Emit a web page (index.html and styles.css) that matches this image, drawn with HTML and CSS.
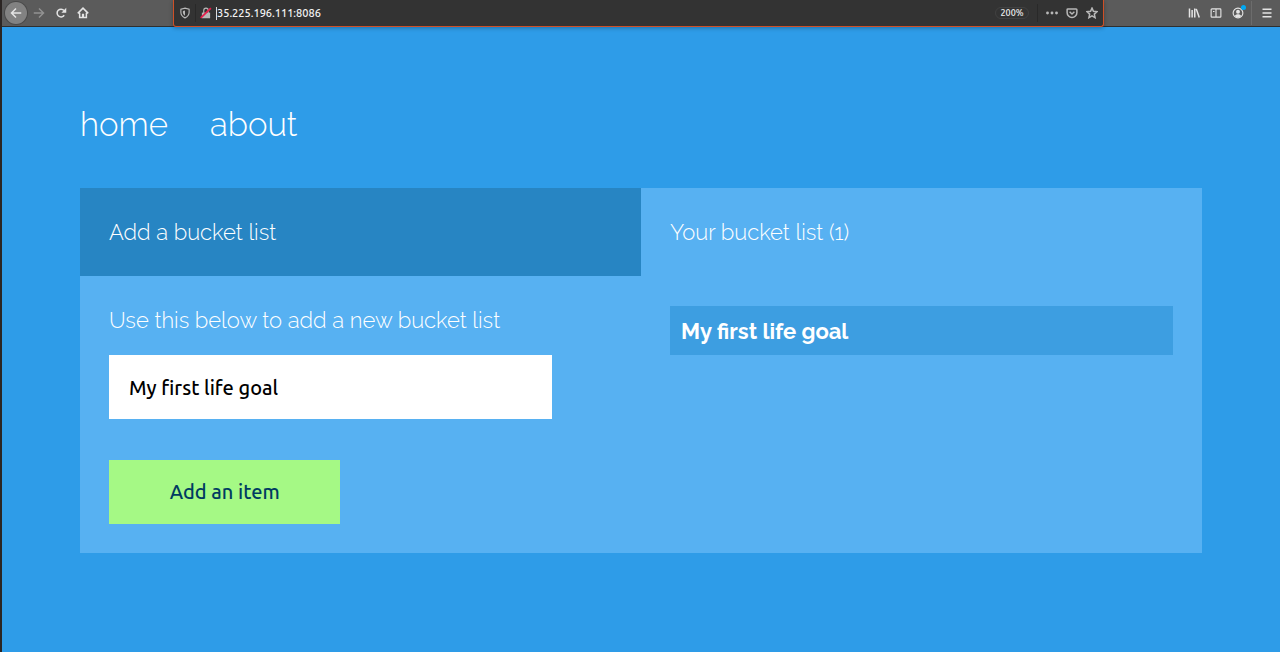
FILE: index.html
```html
<!DOCTYPE html>
<html lang="en">
<head>
<meta charset="utf-8">
<title>Bucket list</title>
<link rel="stylesheet" href="styles.css">
</head>
<body>
<div class="window">
  <header class="toolbar">
    <div class="nav-buttons">
      <button class="icon-button back" aria-label="Back"><svg viewBox="0 0 16 16"><path d="M15 8H1.500M8 2L2 8l6 6"/></svg></button>
      <button class="icon-button forward" aria-label="Forward"><svg viewBox="0 0 16 16"><path d="M1 8h13.500M8 2l6 6-6 6"/></svg></button>
      <button class="icon-button" aria-label="Reload"><svg viewBox="0 0 16 16"><path d="M12.300 11A5.200 5.200 0 1 1 12 4.700"/><path class="solid" d="M15 1v6.500H8.500z"/></svg></button>
      <button class="icon-button" aria-label="Home"><svg viewBox="0 0 16 16"><path d="M1 8.500L8 1.500l7 7M3.500 7.500V14h9V7.500"/><path class="solid" d="M6.500 9h3v5h-3z"/></svg></button>
    </div>
    <div class="url-bar">
      <span class="site-info">
        <svg class="icon" viewBox="0 0 16 16"><path d="M8 1.500l5.500 1.500v4c0 3.500-2.300 6-5.500 7.500-3.200-1.500-5.500-4-5.500-7.500V3z"/><path class="solid" d="M8 4.500v7c-1.800-1-2.800-2.500-2.800-4.500V5.300z"/></svg>
      </span>
      <svg class="icon lock" viewBox="0 0 16 16"><path d="M5 8V4.500a3 3 0 0 1 6 0V8"/><path class="solid" d="M2.500 7.500h11V15h-11z"/><path class="slash" d="M1 14.500L14.500 1.500"/></svg>
      <span class="caret"></span>
      <input class="url" type="text" aria-label="Address" value="35.225.196.111:8086">
      <button class="zoom-level">200%</button>
      <span class="divider"></span>
      <button class="icon-button small" aria-label="Page actions"><svg viewBox="0 0 16 16"><g class="solid"><circle cx="2" cy="8" r="1.900"/><circle cx="8" cy="8" r="1.900"/><circle cx="14" cy="8" r="1.900"/></g></svg></button>
      <button class="icon-button small" aria-label="Save to Pocket"><svg viewBox="0 0 16 16"><path d="M2.500 2.500h11a1 1 0 0 1 1 1v4a6.500 6.500 0 0 1-13 0v-4a1 1 0 0 1 1-1zM4.800 6.300L8 9.300l3.200-3"/></svg></button>
      <button class="icon-button small" aria-label="Bookmark"><svg viewBox="0 0 16 16"><path d="M8 1.500l1.900 4.300 4.600.5-3.400 3.200 1 4.700L8 11.800l-4.100 2.400 1-4.700L1.500 6.300l4.600-.5z"/></svg></button>
    </div>
    <div class="tool-buttons">
      <button class="icon-button" aria-label="Library"><svg viewBox="0 0 16 16"><path d="M2 2v12M5.500 4v10M9 2v12M11 2.500l4 11.500"/></svg></button>
      <button class="icon-button" aria-label="Sidebars"><svg class="thin" viewBox="0 0 16 16"><path d="M2.500 2.500h11a1 1 0 0 1 1 1v9a1 1 0 0 1-1 1h-11a1 1 0 0 1-1-1v-9a1 1 0 0 1 1-1zM8 2.500v11M4 6h2"/></svg></button>
      <button class="icon-button account" aria-label="Account"><svg class="thin" viewBox="0 0 16 16"><circle cx="8" cy="8" r="6.500"/><circle class="solid" cx="8" cy="6.300" r="2.600"/><path class="solid" d="M3.800 12c1-3 7.400-3 8.400 0-2 2.500-6.400 2.500-8.400 0z"/></svg></button>
      <span class="divider tall"></span>
      <button class="icon-button" aria-label="Menu"><svg viewBox="0 0 16 16"><path d="M2 3h12M2 8h12M2 13h12"/></svg></button>
    </div>
  </header>

  <div class="page">
    <nav class="site-nav">
      <a href="#home">home</a>
      <a href="#about">about</a>
    </nav>
    <main class="panel">
      <section class="column">
        <h2 class="title title-dark">Add a bucket list</h2>
        <form class="form">
          <label class="hint" for="goal">Use this below to add a new bucket list</label>
          <input class="goal-input" id="goal" type="text" value="My first life goal">
          <button class="submit" type="button">Add an item</button>
        </form>
      </section>
      <section class="column">
        <h2 class="title">Your bucket list (1)</h2>
        <ul class="goals">
          <li class="goal">My first life goal</li>
        </ul>
      </section>
    </main>
  </div>
</div>
</body>
</html>
```
FILE: styles.css
```css
* {
  box-sizing: border-box;
}

body {
  margin: 0;
  background: #2e9ce8;
  color: #fff;
  font-family: Raleway, Lato, sans-serif;
}

button,
input {
  margin: 0;
  padding: 0;
  border: 0;
  background: none;
  color: inherit;
  font: inherit;
}

.window {
  min-height: 100vh;
  border-left: 2px solid #2b2523;
}

.toolbar {
  display: flex;
  height: 27px;
  background: #5b5b5b;
  border-bottom: 1px solid #2f2f2f;
  color: #e4e4e4;
  font-family: Ubuntu, "Noto Sans", sans-serif;
  font-weight: 500;
}

.nav-buttons {
  display: flex;
  align-items: center;
  width: 171px;
  padding: 0 0 1px 3px;
}

.icon-button {
  display: flex;
  align-items: center;
  justify-content: center;
  width: 22px;
  height: 22px;
}

.toolbar svg {
  width: 12px;
  height: 12px;
  fill: none;
  stroke: currentColor;
  stroke-width: 2;
}

.toolbar .thin {
  stroke-width: 1.5;
}

.toolbar .solid {
  fill: currentColor;
  stroke: none;
}

.back {
  margin-right: 1px;
  border-radius: 50%;
  background: #828282;
  box-shadow: 0 0 0 1px #4a4a4a;
}

.forward {
  color: #929292;
}

.url-bar {
  display: flex;
  flex: 1;
  align-items: center;
  height: 27px;
  background: #333;
  border: 1px solid #cf4f26;
  border-top: 0;
  border-radius: 0 0 3px 3px;
  color: #b8b8b8;
  box-shadow: 0 1px 4px rgba(0, 0, 0, 0.3);
}

.site-info {
  display: flex;
  align-items: center;
  width: 22px;
  height: 18px;
  padding-left: 5px;
  border-right: 1px solid #292929;
}

.toolbar .icon {
  flex: none;
  stroke-width: 1.5;
}

.toolbar .lock {
  margin: 0 4px;
}

.toolbar .slash {
  stroke: #e5204d;
  stroke-width: 2.5;
}

.caret {
  width: 1px;
  height: 13px;
  background: #ddd;
}

.url {
  flex: 1;
  min-width: 0;
  color: #f2f2f2;
  font-size: 11px;
  line-height: 16px;
  outline: 0;
}

.zoom-level {
  width: 34px;
  height: 12px;
  border: 1px solid #414141;
  border-radius: 6px;
  color: #eee;
  font-size: 9px;
  line-height: 10px;
}

.divider {
  width: 1px;
  height: 18px;
  margin: 0 4px 0 8px;
  background: #292929;
}

.small {
  width: 20px;
}

.small:last-child {
  margin-right: 1px;
}

.tool-buttons {
  display: flex;
  align-items: center;
  justify-content: flex-end;
  width: 176px;
  padding: 0 2px 1px 0;
}

.account {
  position: relative;
}

.account::after {
  content: "";
  position: absolute;
  top: 3px;
  right: 3px;
  width: 5px;
  height: 5px;
  border-radius: 50%;
  background: #00a8f4;
}

.tall {
  height: 24px;
  margin: 0 4px 0 2px;
  background: #6c6c6c;
}

.page {
  padding: 74px 78px;
}

.site-nav {
  display: flex;
  gap: 42px;
  padding-bottom: 39px;
  font-size: 33px;
  font-weight: 300;
  line-height: 48px;
}

.site-nav a {
  color: inherit;
  text-decoration: none;
}

.panel {
  display: grid;
  grid-template-columns: 1fr 1fr;
  background: #57b1f2;
}

.title {
  margin: 0;
  padding: 29px;
  font-size: 22px;
  font-weight: 300;
  line-height: 30px;
}

.title-dark {
  background: #2785c3;
}

.form {
  padding: 29px;
}

.hint {
  display: block;
  margin-bottom: 20px;
  font-size: 22px;
  font-weight: 300;
  line-height: 30px;
}

.goal-input {
  display: block;
  width: 88%;
  height: 64px;
  margin-bottom: 41px;
  padding: 0 20px;
  background: #fff;
  color: #000;
  font-family: Ubuntu, "Noto Sans", sans-serif;
  font-size: 20px;
  font-weight: 500;
}

.submit {
  display: block;
  width: 46%;
  height: 64px;
  padding-bottom: 1px;
  background: #a5f985;
  color: #003b61;
  font-family: Ubuntu, "Noto Sans", sans-serif;
  font-size: 20px;
  font-weight: 500;
}

.goals {
  margin: 0;
  padding: 30px 29px;
  list-style: none;
}

.goal {
  padding: 10px 11px 9px;
  background: #3d9ee1;
  font-size: 22px;
  font-weight: 700;
  line-height: 30px;
}
```
